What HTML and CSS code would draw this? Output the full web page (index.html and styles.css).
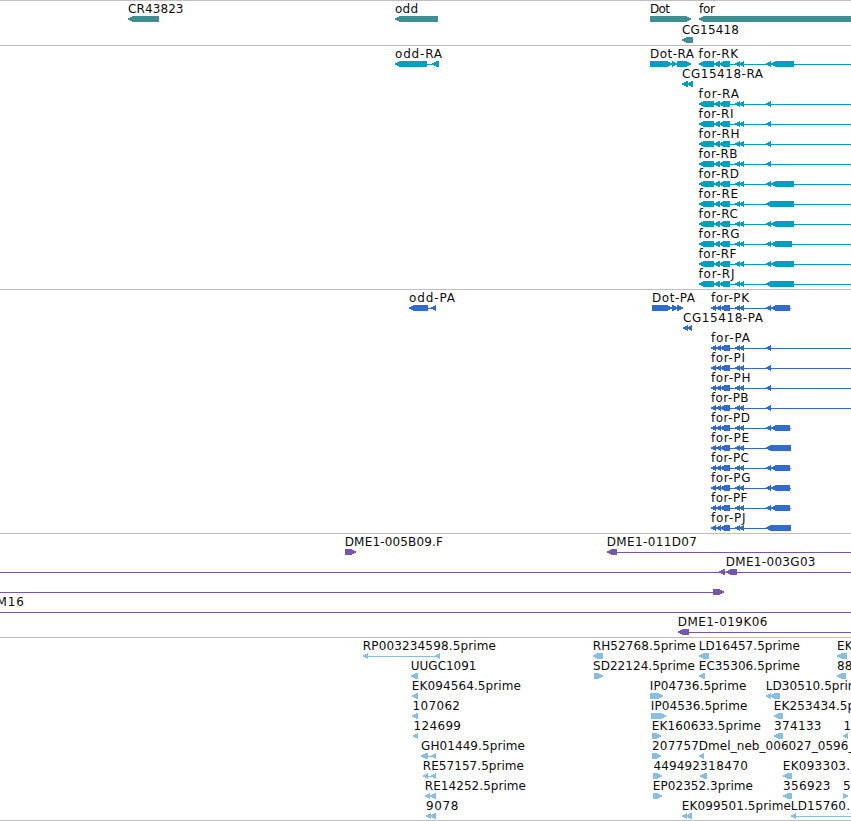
FILE: index.html
```html
<!DOCTYPE html>
<html lang="en">
<head>
<meta charset="utf-8">
<title>Genome browser</title>
<link rel="stylesheet" href="styles.css">
</head>
<body>
<main class="tracks" id="tracks"></main>
<script src="tracks.js"></script>
</body>
</html>
```
FILE: styles.css
```css
body {
  margin: 0;
  background: #fff;
  overflow: hidden;
}
.tracks {
  display: flex;
  flex-direction: column;
  border-bottom: 1px solid #bebebe;
}
.track {
  border-top: 1px solid #bebebe;
}
.canvas {
  display: block;
  width: 100%;
  fill: currentColor;
}
.genes { color: #3f8e94; }
.transcripts { color: #009ebf; }
.proteins { color: #316ccc; }
.clones { color: #7757aa; }
.ests { color: #88bedf; }
.glyph {
  shape-rendering: crispEdges;
}
.label {
  fill: #0c0c0c;
  font: 12px "DejaVu Sans", sans-serif;
}
```
FILE: tracks.js
```js
// Feature: [row, label, label start, label end, blocks, line]
// Block: [start, end, strand], strand defaults to the reverse one.
const head = [[699, 714], [714, 720], [719, 730], [735, 740], [739, 744]];
const pHead = [[711, 716], [716, 721], [720, 730], [735, 740], [739, 744]];
const rna = (row, name, end, tail) =>
  [row, 'for-' + name, 698.6, end, head.concat(tail), [702, 851]];
const protein = (row, name, end, tail, lineEnd) =>
  [row, 'for-' + name, 711, end, pHead.concat(tail), [714, lineEnd]];
const short = [[766, 771]];
const split = [[766, 771], [771, 794]];
const pSplit = [[766, 771], [771, 790]];

const tracks = [
  { kind: 'genes', height: 44, step: 21, features: [
    [0, 'CR43823', 128, 183.5, [[128, 159]]],
    [0, 'odd', 395, 418, [[395, 438]]],
    [0, 'Dot', 650, 670, [[650, 691, '+']]],
    [0, 'for', 699, 715, [[699, 860]]],
    [1, 'CG15418', 682, 739, [[682, 693]]]
  ] },
  { kind: 'transcripts', height: 243, step: 20, features: [
    [0, 'odd-RA', 395, 442, [[395, 427], [432, 439]], [398, 438]],
    [0, 'Dot-RA', 650, 694, [[650, 672, '+'], [672, 677, '+'], [677, 691, '+']]],
    rna(0, 'RK', 738, split),
    [1, 'CG15418-RA', 682, 763, [[682, 688], [687, 693]]],
    rna(2, 'RA', 739, short),
    rna(3, 'RI', 733.5, short),
    rna(4, 'RH', 739.5, short),
    rna(5, 'RB', 737.5, short),
    rna(6, 'RD', 739, split),
    rna(7, 'RE', 738, [[766, 794]]),
    rna(8, 'RC', 738, split),
    rna(9, 'RG', 739.5, [[766, 771], [771, 792]]),
    rna(10, 'RF', 736.5, split),
    rna(11, 'RJ', 734.5, [[766, 794]])
  ] },
  { kind: 'proteins', height: 243, step: 20, features: [
    [0, 'odd-PA', 409, 455, [[409, 428], [431, 436]], [412, 435]],
    [0, 'Dot-PA', 652, 695, [[652, 672, '+'], [672, 678, '+'], [677, 683, '+']]],
    protein(0, 'PK', 749, pSplit, 791),
    [1, 'CG15418-PA', 683, 763, [[683, 688], [687, 692]]],
    protein(2, 'PA', 750, short, 851),
    protein(3, 'PI', 745, short, 851),
    protein(4, 'PH', 750.5, short, 851),
    protein(5, 'PB', 748.5, short, 851),
    protein(6, 'PD', 750, pSplit, 791),
    protein(7, 'PE', 749, [[766, 791]], 791),
    protein(8, 'PC', 749, pSplit, 791),
    protein(9, 'PG', 750.5, pSplit, 791),
    protein(10, 'PF', 747.5, pSplit, 791),
    protein(11, 'PJ', 745.5, [[766, 791]], 791)
  ] },
  { kind: 'clones', height: 103, step: 20, features: [
    [0, 'DME1-005B09.F', 344.7, 443, [[345, 356, '+']]],
    [0, 'DME1-011D07', 606.7, 697, [[607, 617]], [610, 851]],
    [1, 'DME1-003G03', 725.7, 815.5, [[719, 725], [726, 737]], [0, 851]],
    [2, '', 0, 0, [[713, 724, '+']], [0, 720]],
    [3, 'M16', -3.5, 24, [], [0, 851]],
    [4, 'DME1-019K06', 677.7, 767.5, [[678, 689]], [681, 851]]
  ] },
  { kind: 'ests', height: 182, step: 20, features: [
    [0, 'RP003234598.5prime', 362.8, 496, [[363, 368], [435, 440]], [365, 438]],
    [1, 'UUGC1091', 410.8, 476.5, [[411, 418]]],
    [2, 'EK094564.5prime', 411.8, 521, [[412, 418]]],
    [3, '107062', 412.5, 460, [[412, 418]]],
    [4, '124699', 413.5, 461, [[413, 418]]],
    [5, 'GH01449.5prime', 421, 525, [[421, 428], [431, 436]], [423, 434]],
    [6, 'RE57157.5prime', 422.8, 524, [[423, 428], [431, 436]], [425, 434]],
    [7, 'RE14252.5prime', 424.8, 526, [[425, 430], [430, 436]]],
    [8, '9078', 426, 458.5, [[426, 431], [430, 436]]],
    [0, 'RH52768.5prime', 592.8, 696, [[593, 603]]],
    [1, 'SD22124.5prime', 593, 695, [[594, 603, '+']]],
    [0, 'LD16457.5prime', 698.8, 800, [[699, 709]]],
    [1, 'EC35306.5prime', 698.8, 800, [[699, 705]]],
    [2, 'IP04736.5prime', 649.8, 746.5, [[650, 663, '+']]],
    [3, 'IP04536.5prime', 650.8, 747.5, [[651, 666, '+']]],
    [4, 'EK160633.5prime', 651.8, 761, [[652, 661, '+']]],
    [5, '207757', 652, 699, [[652, 661, '+']]],
    [5, 'Dmel_neb_006027_0596_', 698.8, 854.5, [[699, 704]]],
    [6, '449492', 653.5, 700, [[653, 662, '+']]],
    [6, '318470', 700, 748, [[700, 707]]],
    [7, 'EP02352.3prime', 652.8, 753, [[653, 662, '+']]],
    [8, 'EK099501.5prime', 681.8, 791, [[682, 687], [686, 692]]],
    [2, 'LD30510.5prime', 765.8, 867, [[766, 771], [770, 780]]],
    [3, 'EK253434.5prime', 773.8, 883, [[774, 783]]],
    [4, '374133', 774, 821.5, [[774, 783]]],
    [4, '1', 843.5, 851, [[843, 848]]],
    [6, 'EK093303.', 782.8, 850, [[783, 792]]],
    [7, '356923', 783, 830.5, [[783, 792]]],
    [7, '5', 843, 850.6, [[843, 848, '+']]],
    [8, 'LD15760.', 790.8, 850, [[791, 796]], [793, 851]],
    [0, 'EK', 837, 852.5, [[837, 847]]],
    [1, '88', 837, 852.5, [[837, 846]]]
  ] }
];

// A six pixel high block ending in a five pixel arrow tip.
function block([start, end, strand], y) {
  const tip = strand === '+' ? end : start;
  const base = strand === '+' ? start : end;
  const dir = strand === '+' ? -1 : 1;
  const outline = [
    [tip, 2.45], [tip + 2 * dir, 1.45], [tip + 5 * dir, 0], [base, 0],
    [base, 6], [tip + 5 * dir, 6], [tip + 2 * dir, 4.55], [tip, 3.55]
  ];
  const points = outline.map(([px, py]) => px + ',' + (y + py)).join(' ');
  return `<polygon class="glyph" points="${points}"/>`;
}

function feature([row, name, from, to, blocks, line], step) {
  const y = 15 + row * step;
  let out = '';
  if (line) {
    out += `<rect class="glyph" x="${line[0]}" y="${y + 3}" width="${line[1] - line[0]}" height="1"/>`;
  }
  out += blocks.map(b => block(b, y)).join('');
  if (name) {
    out += `<text class="label" x="${from}" y="${y - 3}" textLength="${to - from}">${name}</text>`;
  }
  return `<g>${out}</g>`;
}

document.getElementById('tracks').innerHTML = tracks.map(t =>
  `<section class="track ${t.kind}"><svg class="canvas" height="${t.height}">` +
  t.features.map(f => feature(f, t.step)).join('') +
  '</svg></section>'
).join('');
```
